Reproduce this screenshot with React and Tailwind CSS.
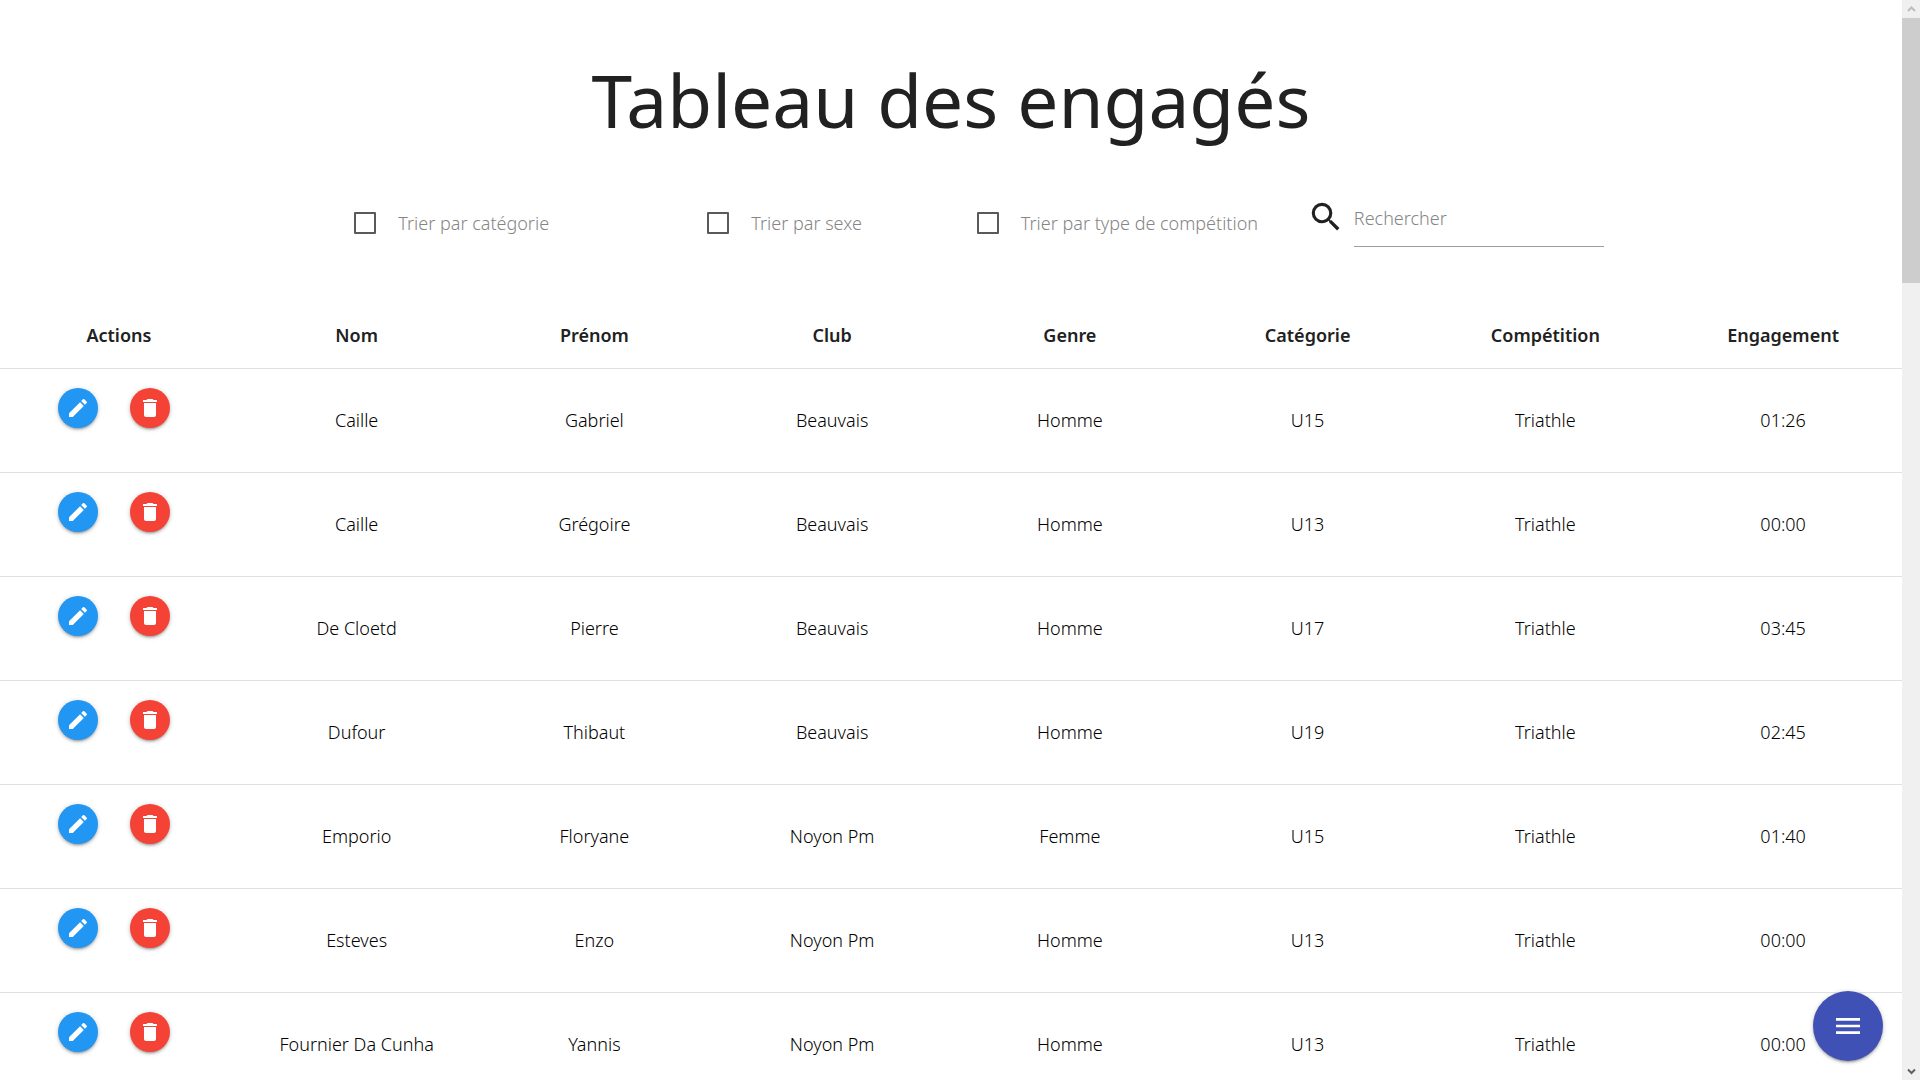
import React from "react";

const columns = ["Actions", "Nom", "Prénom", "Club", "Genre", "Catégorie", "Compétition", "Engagement"];

const entries = [
  ["Caille", "Gabriel", "Beauvais", "Homme", "U15", "Triathle", "01:26"],
  ["Caille", "Grégoire", "Beauvais", "Homme", "U13", "Triathle", "00:00"],
  ["De Cloetd", "Pierre", "Beauvais", "Homme", "U17", "Triathle", "03:45"],
  ["Dufour", "Thibaut", "Beauvais", "Homme", "U19", "Triathle", "02:45"],
  ["Emporio", "Floryane", "Noyon Pm", "Femme", "U15", "Triathle", "01:40"],
  ["Esteves", "Enzo", "Noyon Pm", "Homme", "U13", "Triathle", "00:00"],
  ["Fournier Da Cunha", "Yannis", "Noyon Pm", "Homme", "U13", "Triathle", "00:00"],
];

const shadow =
  "shadow-[0_2px_2px_0_rgba(0,0,0,0.14),0_3px_1px_-2px_rgba(0,0,0,0.12),0_1px_5px_0_rgba(0,0,0,0.2)]";

function Icon({ d, className }) {
  return (
    <svg viewBox="0 0 24 24" fill="currentColor" aria-hidden="true" className={className}>
      <path d={d} />
    </svg>
  );
}

const paths = {
  edit: "M3 17.25V21h3.75L17.81 9.94l-3.75-3.75L3 17.25zM20.71 7.04a.996.996 0 0 0 0-1.41l-2.34-2.34a.996.996 0 0 0-1.41 0l-1.83 1.83 3.75 3.75 1.83-1.83z",
  trash: "M6 19c0 1.1.9 2 2 2h8c1.1 0 2-.9 2-2V7H6v12zM19 4h-3.5l-1-1h-5l-1 1H5v2h14V4z",
  menu: "M3 18h18v-2H3v2zm0-5h18v-2H3v2zm0-7v2h18V6H3z",
  search:
    "M15.5 14h-.79l-.28-.27A6.471 6.471 0 0 0 16 9.5 6.5 6.5 0 1 0 9.5 16c1.61 0 3.09-.59 4.23-1.57l.27.28v.79l5 4.99L20.49 19l-4.99-5zm-6 0C7.01 14 5 11.99 5 9.5S7.01 5 9.5 5 14 7.01 14 9.5 11.99 14 9.5 14z",
};

function SortOption({ label }) {
  return (
    <div className="flex justify-center pt-3">
      <label className="flex h-[26px] items-center gap-[22px] whitespace-nowrap text-[#858585]">
        <input
          type="checkbox"
          className="size-[22px] shrink-0 appearance-none rounded-[1px] border-2 border-[#5a5a5a] checked:bg-[#26a69a]"
        />
        {label}
      </label>
    </div>
  );
}

function ActionButton({ label, icon, className }) {
  return (
    <button
      type="button"
      aria-label={label}
      className={`flex size-10 items-center justify-center rounded-full text-white ${shadow} ${className}`}
    >
      <Icon d={icon} className="size-6" />
    </button>
  );
}

function Scrollbar() {
  return (
    <div aria-hidden="true" className="flex w-[18px] shrink-0 flex-col items-center bg-[#f0f0f0]">
      <svg viewBox="0 0 18 18" className="size-[18px] shrink-0" fill="none" stroke="#bdbdbd" strokeWidth="2">
        <path d="M6 11l3.5-3.5L13 11" />
      </svg>
      <div className="h-[265px] w-full bg-[#cdcdcd]" />
      <svg viewBox="0 0 18 18" className="mt-auto size-[18px] shrink-0" fill="none" stroke="#606060" strokeWidth="2">
        <path d="M6 7.5l3.5 3.5L13 7.5" />
      </svg>
    </div>
  );
}

export default function App() {
  return (
    <div className="flex h-screen overflow-hidden bg-white font-['Noto_Sans',sans-serif] text-lg font-light text-black">
      <div className="relative min-w-0 flex-1 overflow-hidden">
        <h1 className="pt-12 text-center text-[73px] leading-[104px] font-normal text-[#212121]">
          Tableau des engagés
        </h1>

        <form className="mx-auto mt-[38px] grid w-[70%] grid-cols-4 pt-2">
          <SortOption label="Trier par catégorie" />
          <SortOption label="Trier par sexe" />
          <SortOption label="Trier par type de compétition" />
          <div className="flex items-start px-[13px]">
            <label htmlFor="recherche" aria-label="Rechercher" className="w-[57px] shrink-0 pl-[10px] text-[#212121]">
              <Icon d={paths.search} className="size-[38px]" />
            </label>
            <input
              id="recherche"
              type="text"
              placeholder="Rechercher"
              className="h-[49px] min-w-0 flex-1 border-b border-[#9e9e9e] pb-2 outline-none placeholder:text-[#858585]"
            />
          </div>
        </form>

        <table className="mt-[55px] w-full table-fixed border-collapse text-center">
          <thead>
            <tr className="border-b border-[#e0e0e0]">
              {columns.map((name) => (
                <th key={name} scope="col" className="h-[66px] p-0 font-semibold text-[#212121]">
                  {name}
                </th>
              ))}
            </tr>
          </thead>
          <tbody>
            {entries.map((entry) => (
              <tr key={entry.join("-")} className="border-b border-[#e0e0e0]">
                <td className="h-[104px] p-0 pt-[19px] align-top">
                  <div className="flex justify-center gap-8 pr-[9px]">
                    <ActionButton label="Modifier" icon={paths.edit} className="bg-[#2196f3]" />
                    <ActionButton label="Supprimer" icon={paths.trash} className="bg-[#f44336]" />
                  </div>
                </td>
                {entry.map((value, i) => (
                  <td key={columns[i + 1]} className="p-0">
                    {value}
                  </td>
                ))}
              </tr>
            ))}
          </tbody>
        </table>

        <button
          type="button"
          aria-label="Menu"
          className={`absolute right-[19px] bottom-[19px] flex size-[70px] items-center justify-center rounded-full bg-[#3f51b5] text-white ${shadow}`}
        >
          <Icon d={paths.menu} className="size-8" />
        </button>
      </div>
      <Scrollbar />
    </div>
  );
}
